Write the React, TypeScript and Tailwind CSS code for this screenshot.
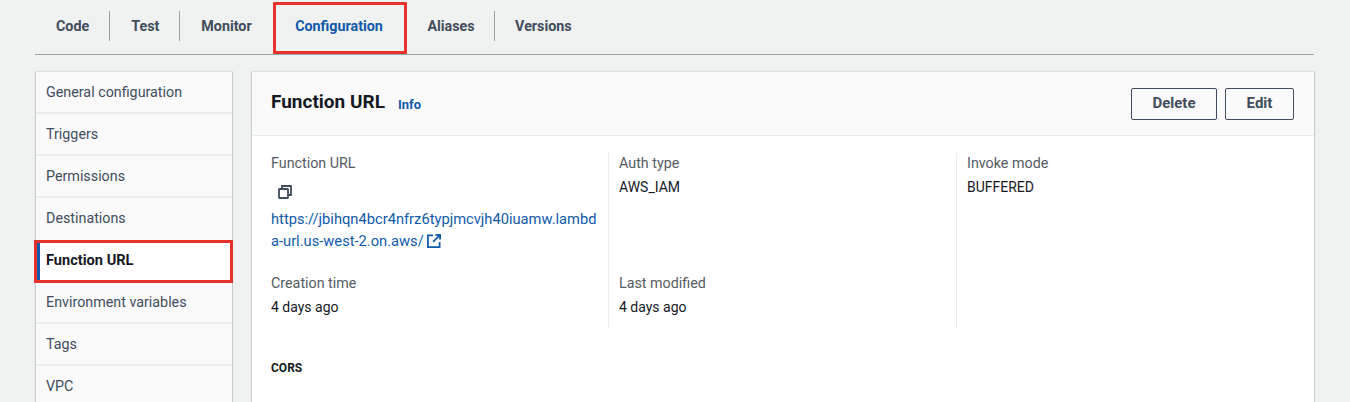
const tabs = [
  { label: "Code", className: "pl-[21px] pr-[20px] border-r text-[#414d5c]" },
  { label: "Test", className: "pl-[21px] pr-[19.5px] border-r text-[#414d5c]" },
  { label: "Monitor", className: "pl-[21.5px] pr-[22.5px] text-[#414d5c]" },
  { label: "Configuration", className: "pl-[21px] pr-[23.5px] text-[#0f5aaa]" },
  { label: "Aliases", className: "pl-[21px] pr-[19px] border-r text-[#414d5c]" },
  { label: "Versions", className: "pl-[20.5px] pr-[20px] text-[#414d5c]" },
]
const navItems = ["General configuration", "Triggers", "Permissions", "Destinations", "Function URL", "Environment variables", "Tags", "VPC"]

const CopyIcon = () => (
  <svg width="14" height="14" viewBox="0 0 14 14" fill="none" stroke="#414d5c" strokeWidth="1.8">
    <rect x="1" y="4" width="9" height="9" rx="0.5" />
    <path d="M4 4V1h9v9h-3" />
  </svg>
)

const ExternalIcon = () => (
  <svg width="14" height="14" viewBox="0 0 15 15" fill="none" stroke="#0f5aaa" strokeWidth="1.9">
    <path d="M6.5 1.5H1v12.5h12.5V8.5" />
    <path d="M9 1h5v5M14 1L6.5 8.5" />
  </svg>
)

const Tabs = () => (
  <div className="relative mr-[1px] flex h-[55px] items-start border-b border-[#97a5ab] pt-[11px]">
    {tabs.map((tab) => (
      <div
        key={tab.label}
        className={`flex h-[30px] items-center border-[#97a5ab] pt-px text-[14.3px] font-bold ${tab.className}`}
      >
        {tab.label}
      </div>
    ))}
    <div className="absolute left-[238px] top-[2px] h-[52px] w-[134px] border-[3px] border-[#e5322b]" />
  </div>
)

const Sidebar = () => (
  <div className="relative w-[198px] shrink-0 self-start border-x border-[#c6cccf] bg-[#fafafa] shadow-[0_-1px_1px_#dfe2e3]">
    {navItems.map((item, i) => (
      <div
        key={item}
        className={`flex h-[42px] items-center border-b-2 pt-px ${
          item === "Function URL"
            ? "border-l-[4px] border-b-transparent border-l-[#0f5aaa] bg-white pl-[6px] text-[14.6px] font-bold text-[#16191f]"
            : "pl-[10px] text-[14.3px] text-[#414d5c]"
        } ${i < 3 || i === 5 || i === 6 ? "border-b-[#eaeded]" : "border-b-transparent"}`}
      >
        {item}
      </div>
    ))}
    <div className="absolute left-[-2px] top-[168px] h-[43px] w-[199px] border-[3px] border-[#e5322b]" />
  </div>
)

const Field = ({ label, value }: { label: string; value: string }) => (
  <div>
    <div className="h-[24px] text-[14.3px] leading-[20px] text-[#545b64]">{label}</div>
    <div className="text-[14px] leading-[20px] text-[#16191f]">{value}</div>
  </div>
)

const Panel = () => (
  <div className="min-w-0 flex-1 border-x border-[#c6cccf] bg-white shadow-[0_-1px_1px_#dfe2e3]">
    <div className="flex h-[64px] items-center justify-between border-b border-[#eaeded] bg-[#fafafa] pl-[19px] pr-[20px]">
      <div className="flex items-center">
        <span className="mt-[-2px] text-[19px] font-bold text-[#16191f]">Function URL</span>
        <span className="ml-[13px] mt-[2px] text-[13px] font-bold text-[#0f5aaa]">Info</span>
      </div>
      <div className="flex gap-[8px]">
        <button className="h-[32px] w-[86px] rounded-[2px] border border-[#414d5c] text-[15px] font-bold text-[#414d5c]">Delete</button>
        <button className="h-[32px] w-[69px] rounded-[2px] border border-[#414d5c] text-[15px] font-bold text-[#414d5c]">Edit</button>
      </div>
    </div>
    <div className="grid grid-cols-[338px_348px_1fr] pl-[19px] pt-[17px]">
      <div className="h-[175px] border-r border-[#eaeded]">
        <div className="text-[14.3px] leading-[20px] text-[#545b64]">Function URL</div>
        <div className="ml-[7px] mt-[12px] h-[14px]"><CopyIcon /></div>
        <div className="mt-[9px] w-[327px] break-all text-[14.7px] leading-[22px] text-[#0f5aaa]">
          https://jbihqn4bcr4nfrz6typjmcvjh40iuamw.lambda-url.us-west-2.on.aws/
          <span className="ml-[3px] inline-block align-[-2px]"><ExternalIcon /></span>
        </div>
        <div className="mt-[21px]">
          <Field label="Creation time" value="4 days ago" />
        </div>
      </div>
      <div className="h-[175px] border-r border-[#eaeded] pl-[10px]">
        <Field label="Auth type" value="AWS_IAM" />
        <div className="mt-[76px]">
          <Field label="Last modified" value="4 days ago" />
        </div>
      </div>
      <div className="pl-[10px]">
        <Field label="Invoke mode" value="BUFFERED" />
      </div>
    </div>
    <div className="pl-[19px] pt-[32px] text-[12px] font-bold leading-[16px] text-[#16191f]">CORS</div>
  </div>
)

export default function App() {
  return (
    <div className="h-[402px] w-[1350px] overflow-hidden bg-[#f0f1f1] pl-[35px] pr-[35px] [font-family:Roboto,sans-serif]">
      <Tabs />
      <div className="mt-[17px] flex gap-[18px]">
        <Sidebar />
        <Panel />
      </div>
    </div>
  )
}
